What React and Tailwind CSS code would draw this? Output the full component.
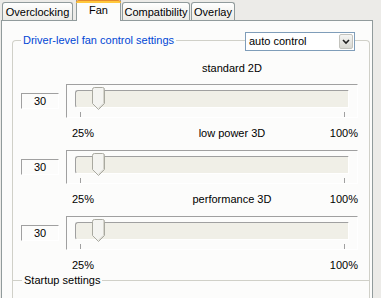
import React from 'react';

const font = { fontFamily: '"Liberation Sans", Arial, sans-serif' };

function Tab({ label, selected, className }) {
  if (selected) {
    return (
      <div
        className={`relative z-10 -mb-[1px] flex h-[21px] items-start justify-center border-x border-[#919b9c] bg-[#fcfcfb] ${className}`}
      >
        <div className="absolute inset-x-[-1px] top-0 h-[3px] rounded-t-[3px] bg-[#ffc83c] border-t border-[#e68b2c]" />
        <span className="mt-[4px] text-[11px] leading-[13px] text-black">{label}</span>
      </div>
    );
  }
  return (
    <div
      className={`flex h-[18px] items-start justify-center rounded-t-[3px] border-x border-t border-[#919b9c] bg-gradient-to-b from-white to-[#ecebe6] ${className}`}
    >
      <span className="mt-[3px] text-[11px] leading-[13px] text-black">{label}</span>
    </div>
  );
}

function Thumb() {
  return (
    <svg width="13" height="24" viewBox="0 0 13 24" className="absolute left-[25px] top-[2px]">
      <path
        d="M0.5 2.5 Q0.5 0.5 2.5 0.5 H10.5 Q12.5 0.5 12.5 2.5 V16.5 L6.5 22.5 L0.5 16.5 Z"
        fill="#f4f4f1"
        stroke="#a9a9a0"
      />
      <path d="M11.5 2 V16.2 L6.5 21.2" fill="none" stroke="#d6d5cd" />
    </svg>
  );
}

function Slider() {
  return (
    <div className="flex items-start">
      <div className="ml-[8px] mt-[9px] flex h-[16px] w-[38px] items-center justify-center border-l border-t border-b border-r border-l-[#a0a0a0] border-t-[#a0a0a0] border-b-white border-r-white text-[11px] leading-[13px]">
        30
      </div>
      <div className="relative ml-[7px] h-[34px] w-[292px] border border-l-[#a0a0a0] border-t-[#a0a0a0] border-b-white border-r-white">
        <div className="ml-[8px] mt-[5px] h-[18px] w-[274px] rounded-l-[3px] border border-l-[#a0a0a0] border-t-[#a0a0a0] border-b-white border-r-white bg-[#f0efe7]" />
        <div className="absolute left-[13px] top-[27px] h-[5px] w-px bg-[#a0a0a0]" />
        <div className="absolute left-[277px] top-[27px] h-[5px] w-px bg-[#a0a0a0]" />
        <Thumb />
      </div>
    </div>
  );
}

function ScaleRow({ label }) {
  return (
    <div className="mt-[9px] flex pl-[59px] pr-[11px] text-[11px] leading-[13px]">
      <span>25%</span>
      <span className="flex-1 pl-[40px] text-center">{label}</span>
      <span>100%</span>
    </div>
  );
}

export default function App() {
  return (
    <div className="flex h-[298px] w-[381px] flex-col overflow-hidden bg-[#ecebe8] text-black" style={font}>
      {/* Tabs */}
      <div className="flex h-[20px] items-end">
        <Tab label="Overclocking" className="ml-[2px] w-[71px]" />
        <Tab label="Fan" selected className="ml-[3px] w-[45px]" />
        <Tab label="Compatibility" className="ml-[1px] w-[68px]" />
        <Tab label="Overlay" className="ml-[1px] w-[44px]" />
      </div>

      {/* Panel */}
      <div className="ml-[1px] w-[372px] flex-1 border-x border-t border-[#919b9c] bg-[#fcfcfb] pl-[10px]">
        {/* Driver-level group */}
        <div className="mt-[19px] h-[240px] w-[358px] rounded-t-[4px] border-x border-t border-[#d0d0c8]">
          <div className="-mt-[9px] flex h-[19px] items-start">
            <span className="ml-[8px] bg-[#fcfcfb] px-[2px] text-[11px] leading-[17px] text-[#0046d5]">
              Driver-level fan control settings
            </span>
            <div className="ml-auto mr-[14px] flex h-[19px] w-[110px] items-center border border-[#7f9db9] bg-white">
              <span className="ml-[3px] flex-1 text-[11px] leading-[13px]">auto control</span>
              <div className="mr-[1px] flex h-[15px] w-[14px] items-center justify-center rounded-[2px] border border-[#c3c3bd] bg-gradient-to-b from-[#f5f5f3] to-[#d8d8d2]">
                <svg width="8" height="6" viewBox="0 0 8 6">
                  <path d="M1 1 L4 4 L7 1" fill="none" stroke="#222" strokeWidth="1.6" />
                </svg>
              </div>
            </div>
          </div>

          <div className="mt-[11px] pl-[189px] text-[11px] leading-[13px]">standard 2D</div>
          <div className="mt-[9px]">
            <Slider />
          </div>
          <ScaleRow label="low power 3D" />
          <div className="mt-[10px]">
            <Slider />
          </div>
          <ScaleRow label="performance 3D" />
          <div className="mt-[10px]">
            <Slider />
          </div>
          <ScaleRow label="" />
        </div>

        {/* Startup group */}
        <div className="h-[40px] w-[358px] border-x border-t border-[#d0d0c8]">
          <span className="-mt-[7px] ml-[9px] inline-block bg-[#fcfcfb] px-[2px] align-top text-[11px] leading-[13px]">
            Startup settings
          </span>
        </div>
      </div>
    </div>
  );
}
